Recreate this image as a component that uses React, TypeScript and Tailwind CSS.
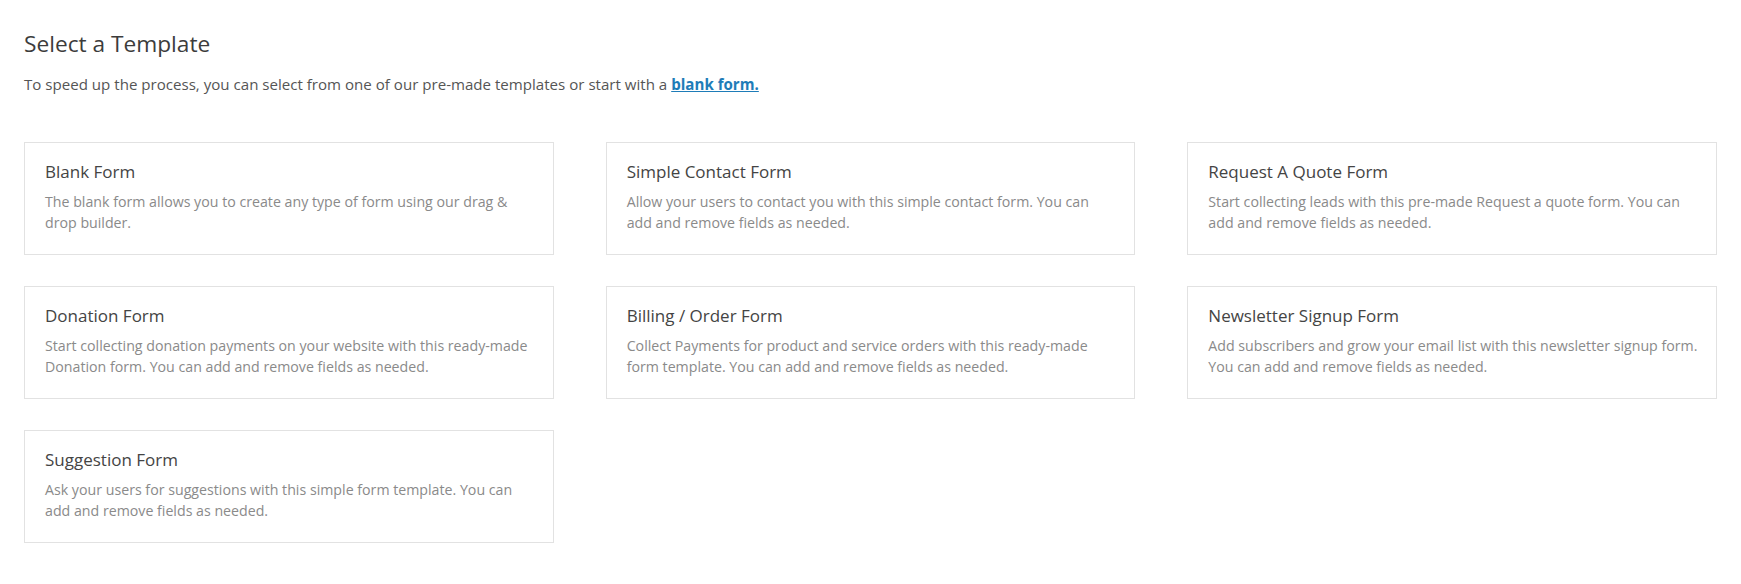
import React from "react";

const templates = [
  { title: "Blank Form", desc: "The blank form allows you to create any type of form using our drag & drop builder." },
  { title: "Simple Contact Form", desc: "Allow your users to contact you with this simple contact form. You can add and remove fields as needed." },
  { title: "Request A Quote Form", desc: "Start collecting leads with this pre-made Request a quote form. You can add and remove fields as needed." },
  { title: "Donation Form", desc: "Start collecting donation payments on your website with this ready-made Donation form. You can add and remove fields as needed." },
  { title: "Billing / Order Form", desc: "Collect Payments for product and service orders with this ready-made form template. You can add and remove fields as needed." },
  { title: "Newsletter Signup Form", desc: "Add subscribers and grow your email list with this newsletter signup form. You can add and remove fields as needed." },
  { title: "Suggestion Form", desc: "Ask your users for suggestions with this simple form template. You can add and remove fields as needed." },
];

export default function App() {
  return (
    <div className="min-h-[584px] bg-white px-[24px] pt-[29px] pb-[40px] font-['Open_Sans',sans-serif]">
      <h1 className="text-[22.7px] leading-[30px] text-[#3c3c3c] font-normal">Select a Template</h1>
      <p className="mt-[14px] text-[15.1px] leading-[22px] text-[#555]">
        To speed up the process, you can select from one of our pre-made templates or start with a{" "}
        <a href="#" className="font-bold text-[#1e7cb8] underline">blank form.</a>
      </p>
      <div className="mt-[47px] grid grid-cols-3 gap-x-[52px] gap-y-[31px]">
        {templates.map((t) => (
          <div key={t.title} className="h-[113px] border border-[#e2e2e2] bg-white pl-[20px] pr-[17px] pt-[18px]">
            <h3 className="text-[17px] leading-[22px] text-[#444]">{t.title}</h3>
            <p className="mt-[8px] text-[14.2px] leading-[21px] text-[#8a8a8a]">{t.desc}</p>
          </div>
        ))}
      </div>
    </div>
  );
}
